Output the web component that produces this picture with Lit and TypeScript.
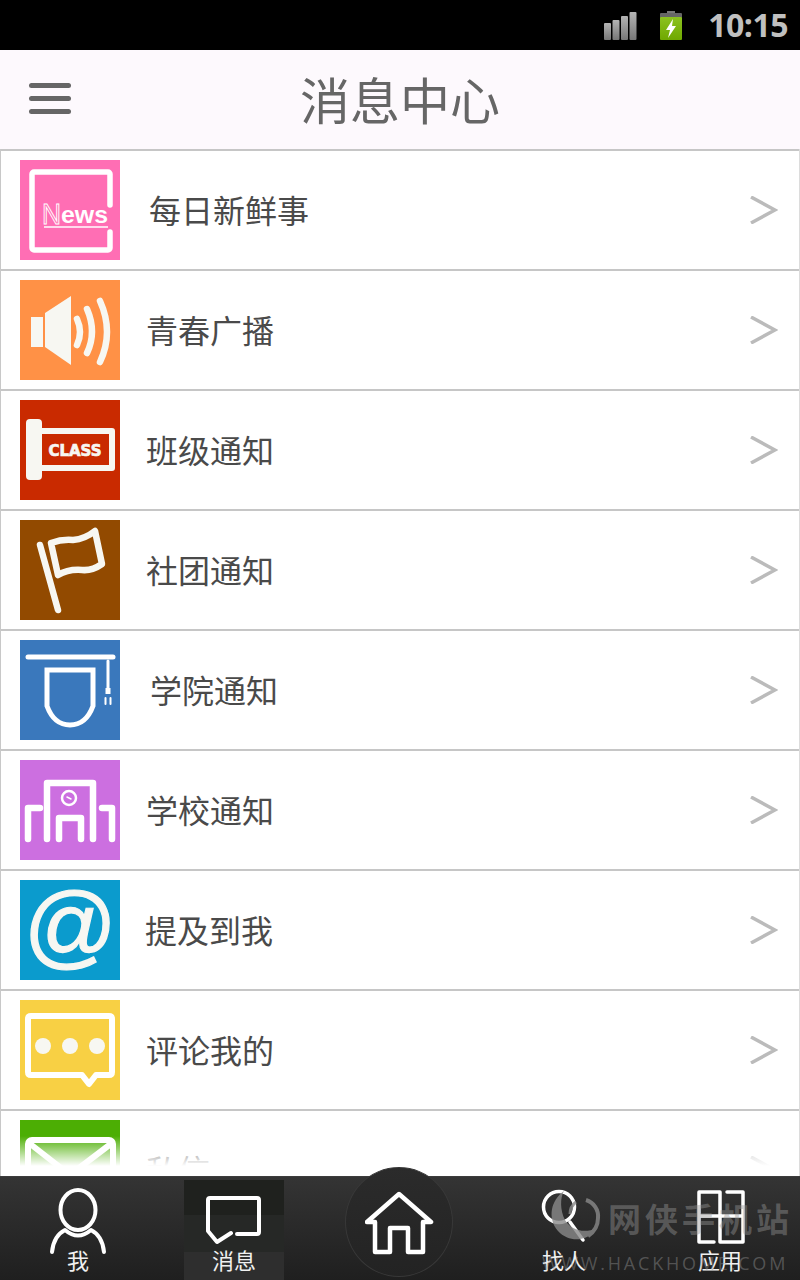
import { LitElement, css, html, svg } from 'lit'
import { customElement } from 'lit/decorators.js'

const icons = {
  news: svg`
    <path d="M90 45V14a2 2 0 0 0-2-2H14a2 2 0 0 0-2 2v74a2 2 0 0 0 2 2h74a2 2 0 0 0 2-2V72" fill="none" stroke="#fff" stroke-width="5.5" stroke-linecap="round"/>
    <text x="22" y="64" class="news-n" textLength="19" lengthAdjust="spacingAndGlyphs">N</text>
    <text x="41" y="63" class="news-ews" textLength="47" lengthAdjust="spacingAndGlyphs">ews</text>
    <path d="M24 67H88" stroke="#fff" stroke-width="1.5" fill="none"/>`,
  speaker: svg`
    <rect x="11" y="37" width="12" height="30" fill="#f7f7f2"/>
    <path d="M25 33L51 16V85L25 67Z" fill="#f7f7f2"/>
    <g fill="none" stroke="#f7f7f2" stroke-width="6.5" stroke-linecap="round">
      <path d="M57 39Q63 52 57 65"/>
      <path d="M67 29Q77 52 67 73"/>
      <path d="M80 21Q94 52 80 82"/>
    </g>`,
  cls: svg`
    <rect x="6" y="19" width="16" height="61" rx="4" fill="#f7f7f2"/>
    <path d="M20 31H92V68H20" fill="none" stroke="#f7f7f2" stroke-width="6" stroke-linejoin="round"/>
    <text x="55" y="56" class="class-text" text-anchor="middle" textLength="53" lengthAdjust="spacingAndGlyphs">CLASS</text>`,
  flag: svg`
    <g fill="none" stroke="#f7f7f2" stroke-linecap="round" stroke-linejoin="round">
      <path d="M20 25L38 90" stroke-width="6.5"/>
      <path d="M31 23Q42 19 53 20Q65 19 75 11L82 44Q72 51 62 50Q48 49 38 55Z" stroke-width="6.5"/>
    </g>`,
  cap: svg`
    <g fill="none" stroke="#fff" stroke-linecap="round">
      <path d="M8 17H93" stroke-width="5"/>
      <path d="M27 30H73V66Q66 85 50 85Q34 85 27 66Z" stroke-width="5"/>
      <path d="M88 21V50" stroke-width="3"/>
      <path d="M85.5 51H90.5" stroke-width="6" stroke-linecap="butt"/>
      <path d="M85.5 58V64M90.5 58V64" stroke-width="2"/>
    </g>`,
  school: svg`
    <g fill="none" stroke="#fff" stroke-linecap="round" stroke-linejoin="round">
      <path d="M27 79V23H73V79" stroke-width="6.5"/>
      <path d="M39 79V58H61V79" stroke-width="6.5"/>
      <path d="M8 79V48H20" stroke-width="6.5"/>
      <path d="M92 79V48H82" stroke-width="6.5"/>
      <circle cx="49" cy="38" r="7" stroke-width="2.5"/>
      <path d="M47 37L51 39" stroke-width="1.5"/>
    </g>`,
  at: svg`<text x="49" y="77" class="at" text-anchor="middle">@</text>`,
  comment: svg`
    <path d="M11 16H89Q92 16 92 19V72Q92 75 89 75H76L69 84L62 75H11Q8 75 8 72V19Q8 16 11 16Z" fill="none" stroke="#fff" stroke-width="6" stroke-linejoin="round"/>
    <circle cx="23" cy="46" r="8" fill="#f7f7f2"/>
    <circle cx="50" cy="46" r="8" fill="#f7f7f2"/>
    <circle cx="77" cy="46" r="8" fill="#f7f7f2"/>`,
  mail: svg`
    <g fill="none" stroke="#fff" stroke-width="6" stroke-linejoin="round">
      <rect x="8" y="20" width="85" height="70" rx="4"/>
      <path d="M9 23L50 55L92 23"/>
    </g>`,
}

const rows = [
  { name: '每日新鲜事', color: '#ff6eb4', icon: icons.news, gap: 29 },
  { name: '青春广播', color: '#ff9146', icon: icons.speaker, gap: 26 },
  { name: '班级通知', color: '#c92a00', icon: icons.cls, gap: 26 },
  { name: '社团通知', color: '#924a00', icon: icons.flag, gap: 26 },
  { name: '学院通知', color: '#3a78bc', icon: icons.cap, gap: 30 },
  { name: '学校通知', color: '#cc6fe0', icon: icons.school, gap: 26 },
  { name: '提及到我', color: '#0b9bcd', icon: icons.at, gap: 25 },
  { name: '评论我的', color: '#f8d044', icon: icons.comment, gap: 26 },
  { name: '私信', color: '#4cae04', icon: icons.mail, gap: 26 },
]

@customElement('app-root')
export class AppRoot extends LitElement {
  render() {
    return html`
      <div class="status">
        <svg class="signal" width="33" height="28" viewBox="0 0 33 28">
          <defs>
            <linearGradient id="sig" x1="0" y1="0" x2="0" y2="1">
              <stop offset="0" stop-color="#b4b4b4"/>
              <stop offset="1" stop-color="#777"/>
            </linearGradient>
          </defs>
          <rect x="0" y="11" width="7" height="17" rx="1" fill="url(#sig)"/>
          <rect x="8.5" y="8" width="7" height="20" rx="1" fill="url(#sig)"/>
          <rect x="17" y="4" width="7" height="24" rx="1" fill="url(#sig)"/>
          <rect x="25.5" y="0" width="7" height="28" rx="1" fill="url(#sig)"/>
        </svg>
        <svg class="battery" width="24" height="30" viewBox="0 0 24 30">
          <defs>
            <linearGradient id="bat" x1="0" y1="0" x2="0" y2="1">
              <stop offset="0" stop-color="#8cc220"/>
              <stop offset="1" stop-color="#6fa800"/>
            </linearGradient>
          </defs>
          <rect x="8" y="0" width="8" height="3" fill="#777"/>
          <rect x="1" y="2" width="22" height="5" rx="1" fill="#666"/>
          <rect x="1" y="6" width="22" height="23" rx="1" fill="url(#bat)"/>
          <path d="M14 8L7 19H11L9 27L17 15H13Z" fill="#fff"/>
        </svg>
        <span class="time">10:15</span>
      </div>

      <header class="top">
        <div class="burger"><i></i><i></i><i></i></div>
        <h1>消息中心</h1>
      </header>

      <div class="list">
        ${rows.map(
          (r) => html`
            <div class="row">
              <svg class="icon" viewBox="0 0 100 100" style="background:${r.color}">${r.icon}</svg>
              <span class="label" style="margin-left:${r.gap}px">${r.name}</span>
              <svg class="chevron" width="28" height="28" viewBox="0 0 28 28">
                <path d="M1 1L25 14L1 27" fill="none" stroke="#bbb" stroke-width="3.5"/>
              </svg>
            </div>
          `,
        )}
        <div class="fade"></div>
      </div>

      <nav class="tabs">
        <div class="tab">
          <svg width="60" height="68" viewBox="0 0 60 68">
            <ellipse cx="30" cy="23" rx="17.5" ry="20" fill="none" stroke="#fff" stroke-width="4"/>
            <path d="M4 65C5 55 9 47 17 43Q30 54 43 43C51 47 55 55 56 65" fill="none" stroke="#fff" stroke-width="4" stroke-linecap="round" stroke-linejoin="round"/>
          </svg>
          <span>我</span>
        </div>
        <div class="tab active">
          <svg width="60" height="68" viewBox="0 0 60 68">
            <path d="M33 47H53a2 2 0 0 0 2-2V13a2 2 0 0 0-2-2H6a2 2 0 0 0-2 2V44L13 55L27 46" fill="none" stroke="#fff" stroke-width="4" stroke-linecap="round" stroke-linejoin="round"/>
          </svg>
          <span>消息</span>
        </div>
        <div class="tab"></div>
        <div class="tab">
          <svg width="60" height="68" viewBox="0 0 60 68">
            <circle cx="25" cy="20" r="15.5" fill="none" stroke="#fff" stroke-width="3.5"/>
            <path d="M36 35L49 53" stroke="#fff" stroke-width="3.5" stroke-linecap="round"/>
          </svg>
          <span>找人</span>
        </div>
        <div class="tab">
          <svg width="60" height="68" viewBox="0 0 60 68">
            <path d="M30 5H9V29H30ZM37 5H53V29H30V55H53V29M9 29V55H24" fill="none" stroke="#fff" stroke-width="3.5" stroke-linejoin="round" stroke-linecap="round"/>
          </svg>
          <span>应用</span>
        </div>
      </nav>

      <div class="home">
        <svg width="70" height="64" viewBox="0 0 70 64">
          <path d="M34 3L66 31H58V61H43V37H25V61H10V31H2Z" fill="none" stroke="#fff" stroke-width="4.5" stroke-linejoin="round"/>
        </svg>
      </div>

      <div class="mark">
        <svg width="54" height="56" viewBox="0 0 54 56">
          <path d="M16 3C3 12 -1 30 10 43C21 55 40 54 49 40C36 46 23 42 17 32C12 22 12 10 16 3Z" fill="#8a8a8a"/>
          <path d="M38 12A17 17 0 0 1 50 30C50 38 46 44 40 48" fill="none" stroke="#8a8a8a" stroke-width="4"/>
          <path d="M28 14A15 15 0 0 0 22 26" fill="none" stroke="#8a8a8a" stroke-width="3"/>
        </svg>
        <span class="mark-name">网侠手机站</span>
        <span class="mark-url">WWW.HACKHOME.COM</span>
      </div>
    `
  }

  static styles = css`
    :host {
      display: flex;
      flex-direction: column;
      position: relative;
      width: 800px;
      height: 1280px;
      overflow: hidden;
      background: #fff;
      font-family: 'Noto Sans CJK SC', 'Liberation Sans', sans-serif;
    }

    .status {
      height: 50px;
      flex: none;
      background: #000;
      display: flex;
      align-items: center;
      justify-content: flex-end;
      padding-right: 12px;
    }
    .signal {
      margin-top: 1px;
    }
    .battery {
      margin: 1px 0 0 22px;
    }
    .time {
      margin-left: 25px;
      font: 700 32px/1 'Open Sans', 'Liberation Sans', sans-serif;
      color: #c0c0c0;
      letter-spacing: -0.5px;
    }

    .top {
      height: 99px;
      flex: none;
      box-sizing: border-box;
      background: #fdf9fd;
      display: grid;
      grid-template-columns: 1fr auto 1fr;
      align-items: center;
    }
    .burger {
      display: flex;
      flex-direction: column;
      gap: 8px;
      width: 42px;
      margin: -2px 0 0 29px;
    }
    .burger i {
      display: block;
      height: 5px;
      border-radius: 2.5px;
      background: #666;
    }
    h1 {
      margin: 0;
      font-size: 50px;
      font-weight: 400;
      line-height: 1;
      color: #666;
      margin-top: -4px;
    }

    .list {
      flex: 1;
      min-height: 0;
      overflow: hidden;
      position: relative;
      box-sizing: border-box;
      border-left: 1px solid #c8c8c8;
      border-right: 1px solid #dcdcdc;
    }
    .row {
      height: 120px;
      flex: none;
      box-sizing: border-box;
      border-top: 2px solid #c6c6c6;
      padding: 0 21px 0 19px;
      display: flex;
      align-items: center;
    }
    .icon {
      width: 100px;
      height: 100px;
      flex: none;
      display: block;
    }
    .label {
      flex: 1;
      font-size: 32px;
      font-weight: 400;
      line-height: 1;
      color: #4a4a4a;
      margin-top: -3px;
    }
    .chevron {
      flex: none;
    }
    .fade {
      position: absolute;
      left: -1px;
      right: -1px;
      bottom: 0;
      height: 40px;
      background: linear-gradient(rgba(255, 255, 255, 0), #fff 30px);
    }

    .news-n {
      font: 400 30px 'Liberation Sans', sans-serif;
      fill: none;
      stroke: #fff;
      stroke-width: 1;
    }
    .news-ews {
      font: 700 24px 'Liberation Sans', sans-serif;
      fill: #fff;
    }
    .class-text {
      font: 700 15px 'DejaVu Sans', sans-serif;
      fill: #f7f7f2;
      stroke: #f7f7f2;
      stroke-width: 0.7;
    }
    .at {
      font: italic 400 92px 'Liberation Sans', sans-serif;
      fill: #f7f7f2;
      stroke: #f7f7f2;
      stroke-width: 1.2;
    }

    .tabs {
      height: 104px;
      flex: none;
      box-sizing: border-box;
      border-top: 1px solid #3c3c3c;
      background: linear-gradient(#343434, #1f1f1f);
      display: grid;
      grid-template-columns: 156px 156px 176px 152px 160px;
    }
    .tab {
      position: relative;
      display: flex;
      flex-direction: column;
      align-items: center;
      justify-content: flex-end;
      padding-bottom: 6px;
      color: #f0f0f0;
      font-size: 22px;
      font-weight: 400;
      line-height: 30px;
    }
    .tab svg {
      position: absolute;
      left: 50%;
      top: 10px;
      transform: translateX(-50%);
    }
    .tab.active {
      width: 100px;
      margin: 3px auto 0;
      background: linear-gradient(#1f211e 0 35%, #262826 35% 72%, #2e2e2e 72%);
    }
    .tab.active svg {
      top: 7px;
    }

    .home {
      position: absolute;
      left: 345px;
      top: 1167px;
      width: 108px;
      height: 110px;
      box-sizing: border-box;
      border-radius: 50%;
      border: 1px solid #383838;
      background: linear-gradient(#2b2b2b, #232323);
      display: flex;
      align-items: center;
      justify-content: center;
      padding: 2px 0 0 2px;
    }

    .mark {
      position: absolute;
      left: 548px;
      top: 1188px;
      width: 252px;
      height: 90px;
      color: rgba(150, 150, 150, 0.55);
      opacity: 0.8;
    }
    .mark svg {
      position: absolute;
      left: 0;
      top: 0;
      overflow: visible;
    }
    .mark-name {
      position: absolute;
      left: 60px;
      top: 8px;
      font-size: 33px;
      font-weight: 700;
      line-height: 44px;
      letter-spacing: 4px;
      white-space: nowrap;
    }
    .mark-url {
      position: absolute;
      left: -6px;
      top: 64px;
      font: 400 18px/22px 'Open Sans', 'Liberation Sans', sans-serif;
      letter-spacing: 2.8px;
      white-space: nowrap;
    }
  `
}

declare global {
  interface HTMLElementTagNameMap {
    'app-root': AppRoot
  }
}
